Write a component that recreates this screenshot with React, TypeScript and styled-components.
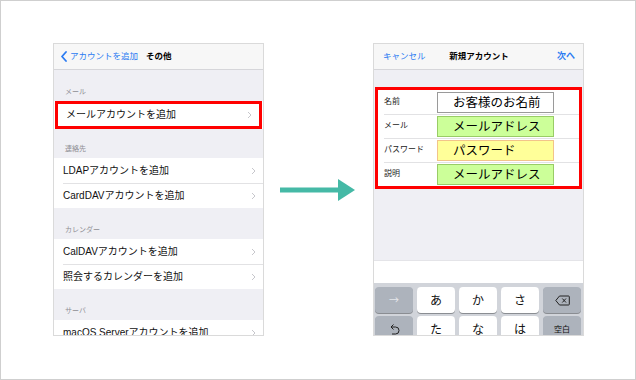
import React from 'react';
import styled, {createGlobalStyle} from 'styled-components';

const GlobalStyle = createGlobalStyle`
  html, body {
    margin: 0;
    padding: 0;
    background: #ffffff;
  }
  body {
    font-family: "Liberation Sans", "Noto Sans CJK JP", sans-serif;
  }
`;

const Frame = styled.div`
  width: 636px;
  height: 380px;
  box-sizing: border-box;
  border: 1px solid #cfcfcf;
  padding: 42px 0 0 52px;
  display: flex;
  align-items: flex-start;
  background: #ffffff;
`;

const Phone = styled.div`
  width: 211px;
  height: 293px;
  box-sizing: border-box;
  border: 1px solid #dadada;
  background: #efeff4;
  display: flex;
  flex-direction: column;
  overflow: hidden;
`;

const NavBar = styled.div`
  height: 26px;
  flex: none;
  box-sizing: border-box;
  background: #f7f7f7;
  border-bottom: 1px solid #d6d6da;
  display: flex;
  align-items: center;
  padding: 0 7px;
  font-size: 8.5px;
  line-height: 1;
  white-space: nowrap;
`;

const CenteredNav = styled(NavBar)`
  display: grid;
  grid-template-columns: 1fr auto 1fr;
  padding: 0 8px 0 9px;
`;

const NavLink = styled.span<{ $bold?: boolean; $right?: boolean }>`
  color: #2b7bf2;
  font-weight: ${p => (p.$bold ? 700 : 400)};
  font-size: ${p => (p.$bold ? '9px' : '8.5px')};
  justify-self: ${p => (p.$right ? 'end' : 'start')};
  display: flex;
  align-items: center;
  gap: 3px;
`;

const NavTitle = styled.span<{ $gap?: number }>`
  color: #000;
  font-weight: 700;
  margin-left: ${p => p.$gap ?? 0}px;
`;

const SectionHeader = styled.div<{ $h: number }>`
  height: ${p => p.$h}px;
  flex: none;
  box-sizing: border-box;
  display: flex;
  align-items: flex-end;
  padding: 0 0 6px 11px;
  font-size: 7px;
  line-height: 1;
  color: #8e8e93;
`;

const Group = styled.div`
  background: #ffffff;
  flex: none;
`;

const Row = styled.div<{ $active?: boolean }>`
  height: ${p => (p.$active ? 28 : 25)}px;
  box-sizing: border-box;
  display: flex;
  align-items: center;
  justify-content: space-between;
  padding: 0 7px 0 ${p => (p.$active ? 8 : 9)}px;
  margin: 0 ${p => (p.$active ? 1 : 0)}px;
  border: ${p => (p.$active ? '3px solid #ff0000' : 'none')};
  background: #ffffff;
  font-size: 10px;
  line-height: 1;
  color: #111;
  white-space: nowrap;

  & + & {
    background: linear-gradient(#e2e2e4, #e2e2e4) 9px 0 / calc(100% - 9px) 1px no-repeat, #ffffff;
  }
`;

const Chevron = () => (
  <svg width="5" height="8" viewBox="0 0 5 8">
    <path d="M1 1 L4 4 L1 7" fill="none" stroke="#c7c7cc" strokeWidth="1" />
  </svg>
);

const BackChevron = () => (
  <svg width="6" height="11" viewBox="0 0 6 11">
    <path d="M5 1 L1 5.5 L5 10" fill="none" stroke="#2b7bf2" strokeWidth="1.8" strokeLinecap="round" strokeLinejoin="round" />
  </svg>
);

const ArrowBox = styled.div`
  width: 109px;
  height: 293px;
  display: flex;
  align-items: center;
  flex: none;
`;

const Gap = styled.div<{ $h: number }>`
  height: ${p => p.$h}px;
  flex: none;
`;

const FormBox = styled.div`
  margin: 0 1px;
  border: 3px solid #ff0000;
  background: #ffffff;
  flex: none;
`;

const FormRow = styled.div`
  height: 24px;
  display: flex;
  align-items: center;
  padding-left: 6px;

  & + & {
    background: linear-gradient(#e2e2e4, #e2e2e4) 6px 0 / calc(100% - 6px) 1px no-repeat, #ffffff;
  }
`;

const FormLabel = styled.span`
  width: 53px;
  font-size: 8px;
  line-height: 1;
  color: #222;
  white-space: nowrap;
`;

type Tone = 'plain' | 'green' | 'yellow';
const toneBg: Record<Tone, string> = {plain: '#ffffff', green: '#ccff99', yellow: '#ffff99'};
const toneBorder: Record<Tone, string> = {plain: '#9a9a9a', green: '#99cc66', yellow: '#f2c48a'};

const FieldBox = styled.div<{ $tone: Tone }>`
  width: 117px;
  height: 21px;
  box-sizing: border-box;
  border: 1px solid ${p => toneBorder[p.$tone]};
  background: ${p => toneBg[p.$tone]};
  display: flex;
  align-items: center;
  padding-left: 15px;
  font-family: "Noto Sans CJK JP", sans-serif;
  font-size: 12.5px;
  line-height: 1;
  color: #000;
  white-space: nowrap;
`;

const Filler = styled.div`
  flex: 1;
`;

const Predict = styled.div`
  height: 23px;
  flex: none;
  background: #ffffff;
  border-top: 1px solid #e4e4e8;
  box-sizing: border-box;
`;

const Keyboard = styled.div`
  height: 52px;
  flex: none;
  box-sizing: border-box;
  background: #d1d4da;
  padding: 4px 2px 0 1px;
  display: grid;
  grid-template-columns: repeat(5, 38px);
  grid-auto-rows: 26px;
  column-gap: 4px;
  row-gap: 3px;
  overflow: hidden;
`;

const Key = styled.div<{ $dark?: boolean; $small?: boolean }>`
  border-radius: 4px;
  background: ${p => (p.$dark ? '#adb3bc' : '#ffffff')};
  box-shadow: 0 1px 0 #8a8d92;
  display: flex;
  align-items: center;
  justify-content: center;
  font-family: "Noto Sans CJK JP", sans-serif;
  font-size: ${p => (p.$small ? '8px' : '12px')};
  line-height: 1;
  color: #111;
`;

const FaintArrow = styled.span`
  color: #e4e6ea;
  font-size: 10px;
`;

const DeleteIcon = () => (
  <svg width="15" height="11" viewBox="0 0 15 11">
    <path d="M4.5 1 H13.5 A0.8 0.8 0 0 1 14.3 1.8 V9.2 A0.8 0.8 0 0 1 13.5 10 H4.5 L0.8 5.5 Z" fill="none" stroke="#222" strokeWidth="1" strokeLinejoin="round" />
    <path d="M7.3 3.5 L11 7.5 M11 3.5 L7.3 7.5" stroke="#222" strokeWidth="1" />
  </svg>
);

const UndoIcon = () => (
  <svg width="11" height="12" viewBox="0 0 11 12">
    <path d="M3 4 H6.5 A3.5 3.5 0 0 1 6.5 11 H3" fill="none" stroke="#222" strokeWidth="1" />
    <path d="M4.5 1.5 L2 4 L4.5 6.5" fill="none" stroke="#222" strokeWidth="1" />
  </svg>
);

const leftSections = [
  {title: 'メール', h: 31, rows: ['メールアカウントを追加'], active: 0},
  {title: '連絡先', h: 29, rows: ['LDAPアカウントを追加', 'CardDAVアカウントを追加']},
  {title: 'カレンダー', h: 31, rows: ['CalDAVアカウントを追加', '照会するカレンダーを追加']},
  {title: 'サーバ', h: 31, rows: ['macOS Serverアカウントを追加']},
];

const formFields: { label: string; value: string; tone: Tone }[] = [
  {label: '名前', value: 'お客様のお名前', tone: 'plain'},
  {label: 'メール', value: 'メールアドレス', tone: 'green'},
  {label: 'パスワード', value: 'パスワード', tone: 'yellow'},
  {label: '説明', value: 'メールアドレス', tone: 'green'},
];

export default function App() {
  return (
    <>
      <GlobalStyle />
      <Frame>
        <Phone>
          <NavBar>
            <NavLink><BackChevron />アカウントを追加</NavLink>
            <NavTitle $gap={8}>その他</NavTitle>
          </NavBar>
          {leftSections.map(section => (
            <React.Fragment key={section.title}>
              <SectionHeader $h={section.h}>{section.title}</SectionHeader>
              <Group>
                {section.rows.map((row, i) => (
                  <Row key={row} $active={section.active === i}>
                    <span>{row}</span>
                    <Chevron />
                  </Row>
                ))}
              </Group>
            </React.Fragment>
          ))}
        </Phone>

        <ArrowBox>
          <svg width="109" height="22" viewBox="0 0 109 22">
            <rect x="16" y="8.5" width="59" height="5" fill="#45b9a6" />
            <polygon points="74,0 91,11 74,22" fill="#45b9a6" />
          </svg>
        </ArrowBox>

        <Phone>
          <CenteredNav>
            <NavLink>キャンセル</NavLink>
            <NavTitle>新規アカウント</NavTitle>
            <NavLink $bold $right>次へ</NavLink>
          </CenteredNav>
          <Gap $h={17} />
          <FormBox>
            {formFields.map(f => (
              <FormRow key={f.label}>
                <FormLabel>{f.label}</FormLabel>
                <FieldBox $tone={f.tone}>{f.value}</FieldBox>
              </FormRow>
            ))}
          </FormBox>
          <Filler />
          <Predict />
          <Keyboard>
            <Key $dark><FaintArrow>→</FaintArrow></Key>
            <Key>あ</Key>
            <Key>か</Key>
            <Key>さ</Key>
            <Key $dark><DeleteIcon /></Key>
            <Key $dark><UndoIcon /></Key>
            <Key>た</Key>
            <Key>な</Key>
            <Key>は</Key>
            <Key $dark $small>空白</Key>
          </Keyboard>
        </Phone>
      </Frame>
    </>
  );
}
